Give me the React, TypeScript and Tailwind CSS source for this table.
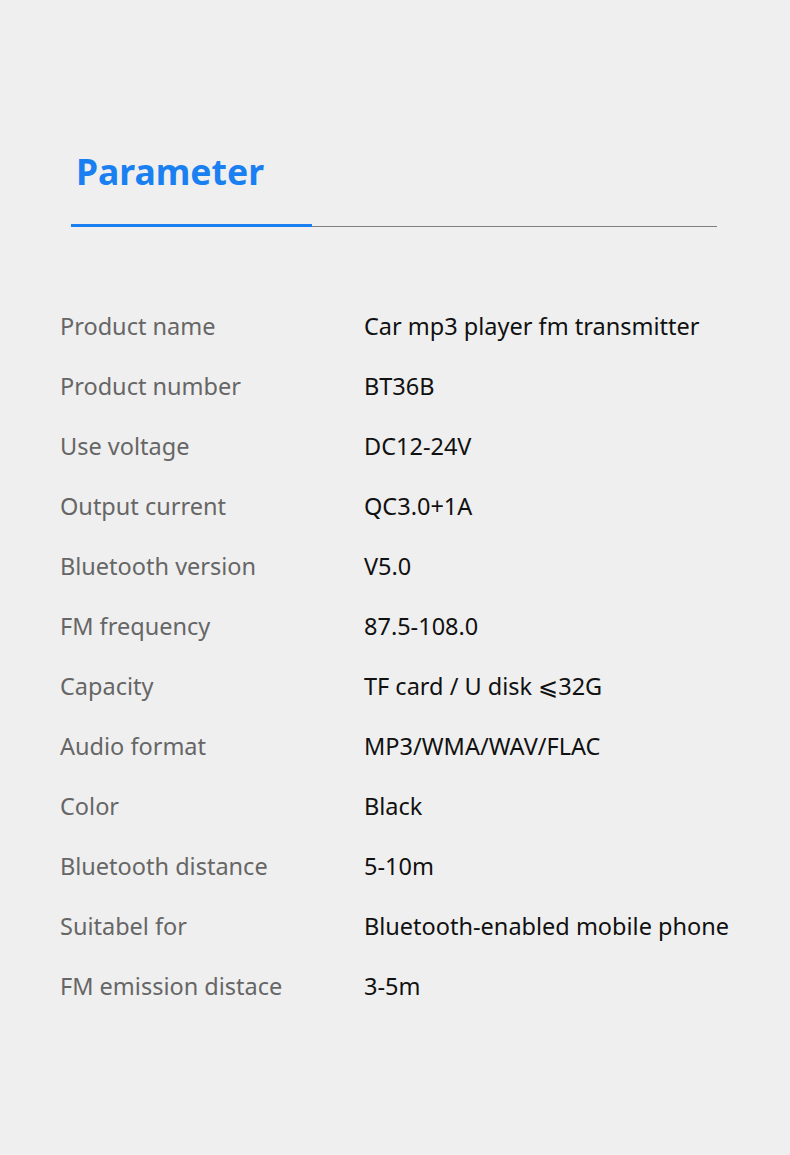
import React from "react";

const rows: [string, string][] = [
  ["Product name", "Car mp3 player fm transmitter"],
  ["Product number", "BT36B"],
  ["Use voltage", "DC12-24V"],
  ["Output current", "QC3.0+1A"],
  ["Bluetooth version", "V5.0"],
  ["FM frequency", "87.5-108.0"],
  ["Capacity", "TF card / U disk ⩽32G"],
  ["Audio format", "MP3/WMA/WAV/FLAC"],
  ["Color", "Black"],
  ["Bluetooth distance", "5-10m"],
  ["Suitabel for", "Bluetooth-enabled mobile phone"],
  ["FM emission distace", "3-5m"],
];

export default function App() {
  return (
    <div className="w-[790px] h-[1155px] bg-[#efefef] overflow-hidden" style={{ fontFamily: '"Noto Sans", "Open Sans", sans-serif' }}>
      <div className="pt-[145px] pl-[76px]">
        <h1 className="text-[35.5px] leading-[52px] font-bold text-[#1a7ff0]">Parameter</h1>
      </div>
      <div className="mt-[27px] ml-[71px] w-[646px] flex items-end">
        <div className="w-[241px] h-[3px] bg-[#1a7ff0]" />
        <div className="flex-1 h-px bg-[#808080]" />
      </div>
      <div className="mt-[70px] flex flex-col">
        {rows.map(([k, v]) => (
          <div key={k} className="flex h-[60px] items-center text-[23.5px]">
            <div className="w-[364px] shrink-0 pl-[60px] text-[#666666]">{k}</div>
            <div className="text-[#111111]">{v}</div>
          </div>
        ))}
      </div>
    </div>
  );
}
